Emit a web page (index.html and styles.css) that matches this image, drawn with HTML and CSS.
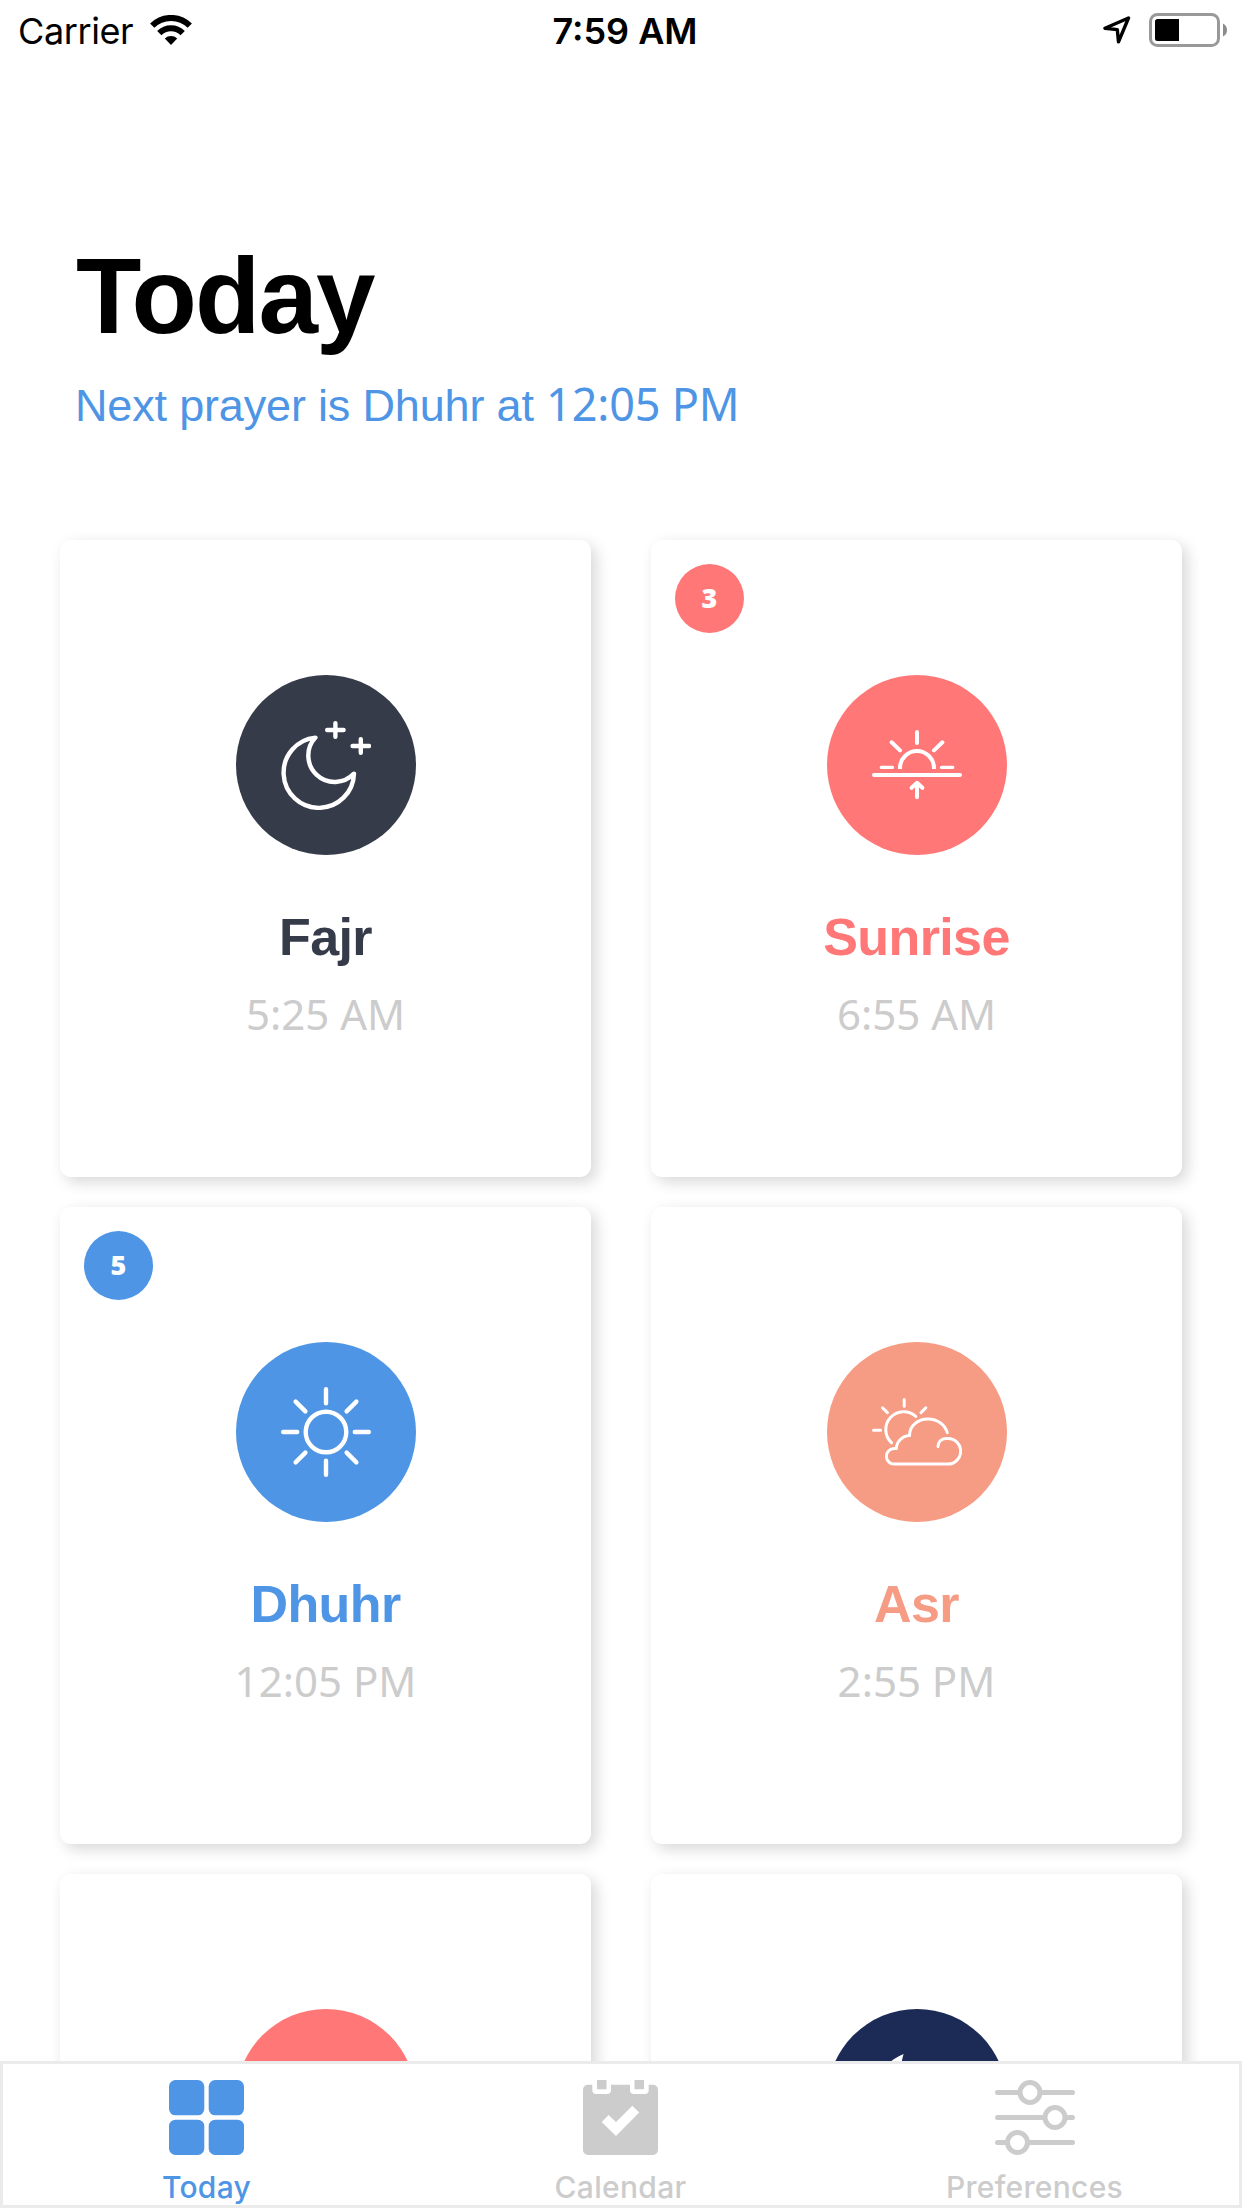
FILE: index.html
```html
<!DOCTYPE html>
<html lang="en">
<head>
<meta charset="utf-8">
<title>Today</title>
<link rel="stylesheet" href="styles.css">
</head>
<body>
<div class="screen">
  <header class="status">
    <div class="status-left">
      <span class="carrier">Carrier</span>
      <svg class="wifi" viewBox="0 0 42 30" width="42" height="30">
        <path d="M21 30 L14.8 23.6 A9 9 0 0 1 27.2 23.6 Z"/>
        <path class="band" d="M9.3 18.1 A16.6 16.6 0 0 1 32.7 18.1"/>
        <path class="band" d="M2.2 10.7 A26.6 26.6 0 0 1 39.8 10.7"/>
      </svg>
    </div>
    <span class="clock">7:59 AM</span>
    <div class="status-right">
      <svg class="locate" viewBox="0 0 28 28" width="28" height="28"><path d="M25.5 2 L2 12.2 L14.3 13.6 L15.5 25.8 Z"/></svg>
      <svg class="battery" viewBox="0 0 78 34" width="78" height="34">
        <rect class="shell" x="1.5" y="1.5" width="68" height="31" rx="7"/>
        <path class="level" d="M8.5 6 H30 V28 H8.5 A2.5 2.5 0 0 1 6 25.5 V8.5 A2.5 2.5 0 0 1 8.5 6 Z"/>
        <path class="nub" d="M74 10.5 Q78 12.5 78 17 T74 23.5 Z"/>
      </svg>
    </div>
  </header>

  <main class="content">
    <h1 class="title">Today</h1>
    <p class="next">Next prayer is Dhuhr at <span class="next-time">12:05 PM</span></p>

    <section class="cards">
      <article class="card fajr">
        <div class="disc">
          <svg class="icon" viewBox="0 0 90 90">
            <path d="M34.4 17.6 A35.2 35.2 0 1 0 73 53.6 A26.3 26.3 0 0 1 34.4 17.6 Z"/>
            <path d="M46.2 10 H62.6 M54.4 3.2 V16.8 M71.6 26 H88 M79.8 19.2 V32.8"/>
          </svg>
        </div>
        <h2 class="name">Fajr</h2>
        <p class="time">5:25 AM</p>
      </article>

      <article class="card sunrise">
        <span class="badge">3</span>
        <div class="disc">
          <svg class="icon mid" viewBox="0 0 90 90">
            <path d="M2 55 H88 M45 12 V23 M19.6 22.3 L28 30.4 M70.4 22.3 L62 30.4"/>
            <path class="short" d="M9.3 47.4 H20.5 M69.5 47.4 H80.7"/>
            <path class="flat" d="M28 49 V48 A17 17 0 0 1 62 48 V49"/>
            <path d="M45 77.3 V63 M39.6 67.8 L45 62.8 L50.4 67.8"/>
          </svg>
        </div>
        <h2 class="name">Sunrise</h2>
        <p class="time">6:55 AM</p>
      </article>

      <article class="card dhuhr">
        <span class="badge">5</span>
        <div class="disc">
          <svg class="icon" viewBox="0 0 90 90">
            <circle cx="45" cy="45" r="20.3"/>
            <path d="M45 2.2 V16.2 M45 73.8 V87.8 M2.2 45 H16.2 M73.8 45 H87.8"/>
            <path d="M14.6 14.6 L24.4 24.4 M75.4 14.6 L65.6 24.4 M14.6 75.4 L24.4 65.6 M75.4 75.4 L65.6 65.6"/>
          </svg>
        </div>
        <h2 class="name">Dhuhr</h2>
        <p class="time">12:05 PM</p>
      </article>

      <article class="card asr">
        <div class="disc">
          <svg class="icon thin" viewBox="0 0 90 90">
            <path d="M66 59.6 C66 55 69.5 51.4 74 51.4 H75.8 A12.8 12.8 0 0 1 75.8 77.1 H22.2 A7.8 7.8 0 0 1 22.2 61.5 H24.4 C24.4 55 30 49 37.6 48.6 C37.2 39 46 32 56 32 C66 32 73 38 75.3 45.6"/>
            <path d="M19.6 55.8 A17.6 17.6 0 0 1 43.8 29.4"/>
            <path d="M32.2 12.5 V19.3 M1.5 43.2 H8.6 M10.6 20.9 L15.4 25.6 M53.8 20.9 L49 25.6"/>
          </svg>
        </div>
        <h2 class="name">Asr</h2>
        <p class="time">2:55 PM</p>
      </article>

      <article class="card maghrib">
        <div class="disc"></div>
      </article>

      <article class="card isha">
        <div class="disc">
          <svg class="icon solid" viewBox="0 0 90 90">
            <path d="M31.6 0 A45 45 0 1 0 90 58 A46 46 0 0 1 31.6 0 Z"/>
          </svg>
        </div>
      </article>
    </section>
  </main>

  <nav class="tabs">
    <a class="tab active">
      <svg viewBox="0 0 75 75" width="75" height="75">
        <rect width="35.3" height="35.3" rx="6.5"/>
        <rect x="39.7" width="35.3" height="35.3" rx="6.5"/>
        <rect y="39.7" width="35.3" height="35.3" rx="6.5"/>
        <rect x="39.7" y="39.7" width="35.3" height="35.3" rx="6.5"/>
      </svg>
      <span>Today</span>
    </a>
    <a class="tab">
      <svg viewBox="0 0 75 75" width="75" height="75">
        <path d="M5 4.7 H9.3 V10 A4 4 0 0 0 13.3 14 H24 A4 4 0 0 0 28 10 V4.7 H47 V10 A4 4 0 0 0 51 14 H61.7 A4 4 0 0 0 65.7 10 V4.7 H70 A5 5 0 0 1 75 9.7 V70 A5 5 0 0 1 70 75 H5 A5 5 0 0 1 0 70 V9.7 A5 5 0 0 1 5 4.7 Z"/>
        <path d="M14 0 H23.5 V9.3 H14 Z M51.5 0 H61 V9.3 H51.5 Z"/>
        <path class="check" d="M25.6 35 L33 42 L49.3 25.7 L56.2 32.6 L33 56 L18.7 42 Z"/>
      </svg>
      <span>Calendar</span>
    </a>
    <a class="tab">
      <svg class="sliders" viewBox="0 0 80 75" width="80" height="75">
        <path d="M2.5 12.5 H77.5 M2.5 37.5 H77.5 M2.5 62.5 H77.5"/>
        <circle cx="35" cy="12.5" r="10"/>
        <circle cx="60" cy="37.5" r="10"/>
        <circle cx="22.5" cy="62.5" r="10"/>
      </svg>
      <span>Preferences</span>
    </a>
  </nav>
</div>
</body>
</html>
```
FILE: styles.css
```css
* { box-sizing: border-box; }

body {
  margin: 0;
  background: #fff;
  font-family: "Liberation Sans", Arial, sans-serif;
}

.screen {
  display: flex;
  flex-direction: column;
  width: 1242px;
  height: 2208px;
  overflow: hidden;
  background: #fff;
}

/* Status bar */
.status {
  display: grid;
  grid-template-columns: 1fr auto 1fr;
  align-items: center;
  flex: none;
  height: 60px;
  padding: 0 15px 0 18px;
  font-family: Inter, "Noto Sans", sans-serif;
  font-size: 36px;
  color: #000;
}
.status-left, .status-right { display: flex; align-items: center; }
.status-left { gap: 17px; }
.status-right { justify-content: flex-end; gap: 18px; }
.carrier { padding-top: 2px; letter-spacing: -.4px; }
.clock { padding: 2px 0 0 5px; font-weight: 600; }
.band { fill: none; stroke: #000; stroke-width: 6; }
.locate { fill: none; stroke: #000; stroke-width: 3.4; stroke-linejoin: round; }
.shell { fill: none; stroke: #999; stroke-width: 3; }
.nub { fill: #8c8c8c; }

/* Heading */
.content { flex: 1; min-height: 0; overflow: hidden; }
.title {
  margin: 175px 0 0 76px;
  font-size: 107px;
  line-height: 122px;
  font-weight: 700;
  letter-spacing: -1.9px;
}
.next {
  margin: 22px 0 0 75px;
  font-size: 45px;
  line-height: 54px;
  letter-spacing: -.17px;
  color: #4e95e6;
}
.next-time { font-family: "Noto Sans", sans-serif; line-height: 1; }

/* Prayer cards */
.cards {
  display: grid;
  grid-template-columns: 531px 531px;
  grid-auto-rows: 637px;
  gap: 30px 60px;
  margin: 107px 0 0 60px;
}
.card {
  position: relative;
  display: flex;
  flex-direction: column;
  align-items: center;
  padding-top: 135px;
  border-radius: 11px;
  background: #fff;
  box-shadow: 5px 5px 15px rgba(0, 0, 0, .16);
}
.disc {
  display: flex;
  align-items: center;
  justify-content: center;
  width: 180px;
  height: 180px;
  border-radius: 50%;
  background: var(--tone);
}
.icon {
  width: 90px;
  height: 90px;
  fill: none;
  stroke: #fff;
  stroke-width: 4.4;
  stroke-linecap: round;
  stroke-linejoin: round;
}
.icon.mid { stroke-width: 4; }
.icon.thin { stroke-width: 3; }
.icon.solid { fill: #fff; stroke: none; }
.short { stroke-width: 3.3; }
.flat { stroke-linecap: butt; }
.name {
  margin: 52px 0 0;
  font-size: 52px;
  line-height: 60px;
  letter-spacing: -.6px;
  color: var(--tone);
}
.time {
  margin: 18px 0 0;
  font-family: "Noto Sans", sans-serif;
  font-size: 42px;
  line-height: 57px;
  color: #ccc;
}
.badge {
  position: absolute;
  top: 24px;
  left: 24px;
  width: 69px;
  height: 69px;
  border-radius: 50%;
  background: var(--tone);
  color: #fff;
  font: 800 27px/67px "Open Sans", "Noto Sans", sans-serif;
  text-align: center;
}

.fajr { --tone: #363b4a; }
.sunrise, .maghrib { --tone: #ff7777; }
.dhuhr { --tone: #4e95e6; }
.asr { --tone: #f69b84; }
.isha { --tone: #1b2b56; }

/* Tab bar */
.tabs {
  display: grid;
  grid-template-columns: repeat(3, 1fr);
  flex: none;
  height: 147px;
  background: #fff;
  box-shadow: inset 0 0 0 3px #ebebeb;
}
.tab {
  display: flex;
  flex-direction: column;
  align-items: center;
  padding: 19px 1px 0 0;
  font: 500 30px/36px Inter, "Noto Sans", sans-serif;
  letter-spacing: .3px;
  color: #ccc;
}
.tab svg { flex: none; margin-bottom: 14px; fill: currentColor; }
.tab.active { color: #4e95e6; }
.tab .check { fill: #fff; }
.sliders path { stroke: currentColor; stroke-width: 5; stroke-linecap: round; }
.sliders circle { fill: #fff; stroke: currentColor; stroke-width: 5; }
```
